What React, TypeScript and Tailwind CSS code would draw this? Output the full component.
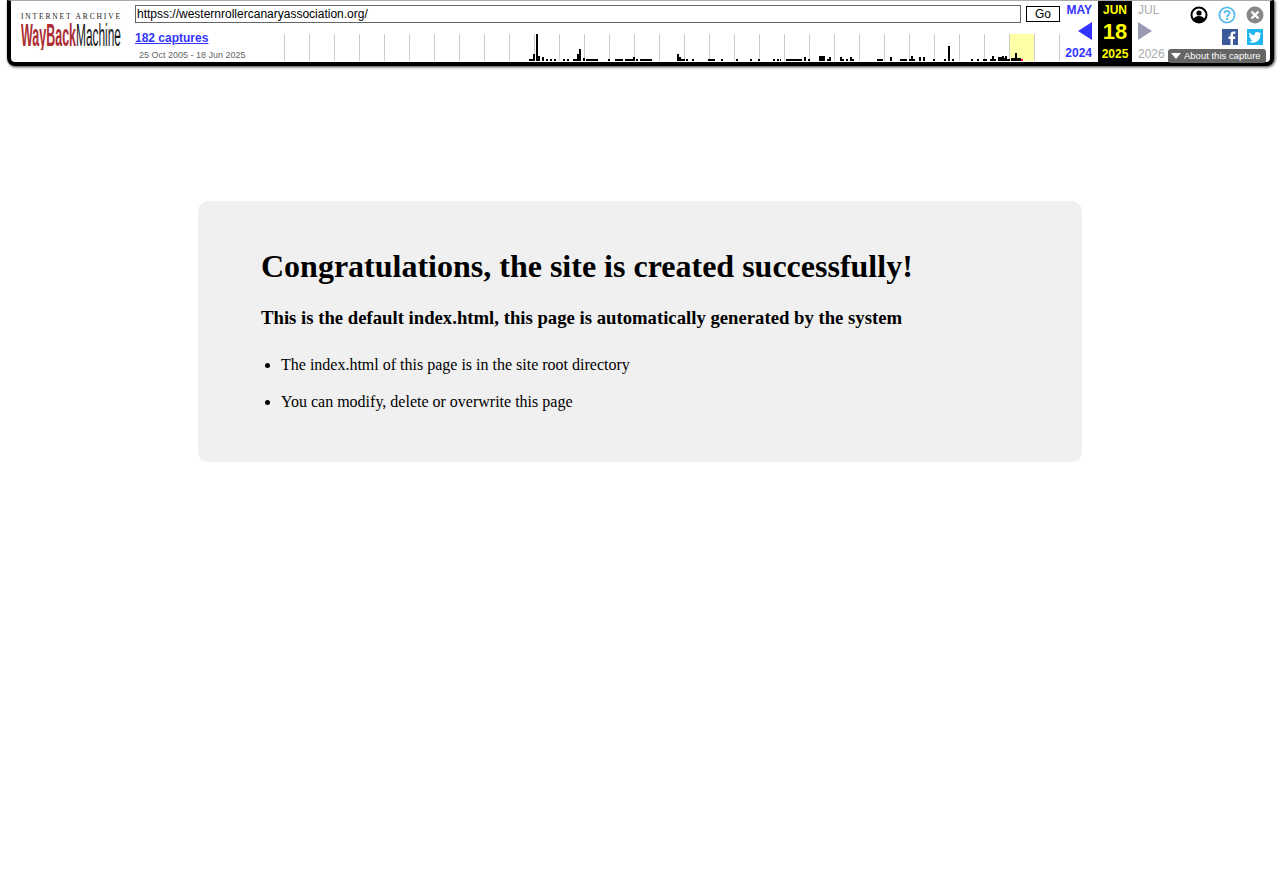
const bars: [number, number, number][] = [
  [529, 4, 2], [533, 2, 7], [536, 2, 27], [538, 2, 5], [542, 2, 4], [546, 2, 2], [550, 2, 2], [554, 2, 2],
  [563, 2, 2], [567, 2, 2], [573, 4, 2], [577, 2, 7], [579, 2, 12], [583, 2, 3], [586, 12, 2],
  [608, 2, 2], [615, 8, 2], [625, 8, 2], [633, 2, 4], [636, 2, 2], [640, 12, 2],
  [677, 2, 7], [679, 2, 4], [681, 4, 2], [686, 2, 2], [692, 2, 2], [708, 7, 2], [721, 2, 2],
  [736, 2, 2], [750, 2, 2], [758, 2, 2], [773, 2, 2], [777, 2, 2], [780, 1, 2],
  [786, 16, 2], [804, 2, 4], [808, 2, 2], [819, 6, 5], [827, 2, 2], [829, 2, 4],
  [840, 2, 4], [842, 2, 2], [846, 2, 2], [850, 2, 4], [852, 2, 2],
  [877, 6, 2], [890, 2, 4], [900, 7, 2], [909, 2, 2], [911, 2, 5], [913, 2, 2], [919, 2, 4], [923, 2, 4],
  [933, 2, 2], [944, 2, 2], [948, 2, 15], [952, 2, 2],
  [971, 2, 2], [977, 2, 2], [983, 4, 2], [990, 2, 2], [992, 2, 5], [994, 2, 2],
  [998, 4, 4], [1002, 2, 5], [1004, 1, 3], [1005, 2, 5], [1007, 3, 2], [1011, 4, 3], [1015, 2, 8], [1017, 4, 3],
]

const ticks = Array.from({ length: 32 }, (_, i) => 284 + i * 25)

function Logo() {
  return (
    <svg width="102" height="38" viewBox="0 0 102 38" className="block">
      <text x="0" y="6.500" textLength="99" lengthAdjust="spacing" fontFamily="Liberation Serif" fontSize="7.500" fill="#222">
        INTERNET ARCHIVE
      </text>
      <text x="0" y="33.500" textLength="55" lengthAdjust="spacingAndGlyphs" fontFamily="Liberation Sans" fontWeight="700" fontSize="31" fill="#ab2e33">
        WayBack
      </text>
      <text x="55" y="33.500" textLength="45" lengthAdjust="spacingAndGlyphs" fontFamily="Liberation Sans" fontSize="31" fill="#1a1a1a">
        Machine
      </text>
    </svg>
  )
}

function Sparkline() {
  return (
    <svg width="778" height="27" viewBox="284 0 778 27" className="block">
      <rect x="1010" y="0" width="24" height="27" fill="#ffffa5" />
      {ticks.map((x) => (
        <rect key={x} x={x} y="0" width="1" height="27" fill="#cccccc" />
      ))}
      {bars.map(([x, w, h]) => (
        <rect key={x} x={x} y={27 - h} width={w} height={h} fill="#000000" />
      ))}
      <rect x="1021" y="25" width="2" height="2" fill="#ff0066" />
    </svg>
  )
}

function UserIcon() {
  return (
    <svg width="18" height="18" viewBox="0 0 18 18">
      <circle cx="9" cy="9" r="7.5" fill="#fff" stroke="#000" strokeWidth="2" />
      <circle cx="9" cy="7" r="2.6" fill="#000" />
      <path d="M3.5 13.5C4.5 10.8 6.5 10 9 10s4.500.8 5.500 3.500A7 7 0 0 1 3.500 13.500Z" fill="#000" />
    </svg>
  )
}

function HelpIcon() {
  return (
    <svg width="18" height="18" viewBox="0 0 18 18">
      <circle cx="9" cy="9" r="7.6" fill="#fff" stroke="#55bbee" strokeWidth="1.8" />
      <path d="M6.500 7.200C6.500 5.700 7.600 4.800 9 4.800s2.600.9 2.600 2.300c0 1.900-2.600 2-2.600 4" fill="none" stroke="#55bbee" strokeWidth="1.800" />
      <rect x="8" y="12" width="2" height="2" fill="#55bbee" />
    </svg>
  )
}

function CloseIcon() {
  return (
    <svg width="18" height="18" viewBox="0 0 18 18">
      <circle cx="9" cy="9" r="8.500" fill="#888888" />
      <path d="M5.500 5.500L12.500 12.500M12.500 5.500L5.500 12.500" stroke="#fff" strokeWidth="2.400" />
    </svg>
  )
}

function FacebookIcon() {
  return (
    <svg width="16" height="16" viewBox="0 0 16 16" className="block">
      <rect width="16" height="16" fill="#3b5998" />
      <path d="M11 16V10h2l.4-2.500H11V6c0-.8.300-1.200 1.200-1.200h1.200V2.600C13 2.500 12.300 2.500 11.600 2.500 9.800 2.500 8.500 3.600 8.500 5.700v1.800h-2V10h2v6Z" fill="#fff" />
    </svg>
  )
}

function TwitterIcon() {
  return (
    <svg width="16" height="16" viewBox="0 0 16 16" className="block">
      <rect width="16" height="16" fill="#1fb6f0" />
      <path d="M14 4.100c-.5.200-1 .4-1.500.4.500-.3 1-.8 1.200-1.400-.5.300-1.100.5-1.700.7a2.700 2.700 0 0 0-4.600 2.400C5.700 6.100 3.800 5.100 2.500 3.500c-.7 1.200-.4 2.800.8 3.600-.4 0-.8-.1-1.200-.3 0 1.300.9 2.400 2.200 2.700-.4.100-.8.100-1.200 0 .3 1.100 1.300 1.800 2.500 1.900A5.400 5.400 0 0 1 1.600 12.500 7.600 7.600 0 0 0 13.300 5.700c.3-.4.500-1 .7-1.600Z" fill="#fff" />
    </svg>
  )
}

export default function App() {
  return (
    <div className="min-h-[885px] bg-white font-['Liberation_Serif',serif] text-black">
      {/* wayback toolbar */}
      <div className="ml-[7px] w-[1267px] h-[66px] bg-white border-x-[4px] border-b-[4px] border-t border-x-black border-b-black border-t-[#aaaaaa] rounded-b-[8px] shadow-[1px_1px_3px_#333333] flex font-['Liberation_Sans',sans-serif]">
        <div className="w-[124px] pl-[10px] pt-[11px] shrink-0">
          <Logo />
        </div>

        <div className="w-[927px] shrink-0 flex flex-col">
          <div className="flex items-start pt-[4px] h-[33px]">
            <div className="w-[886px] h-[18px] border border-[#666666] text-[12px] leading-[16px] pl-[1px] text-black">
              httpss://westernrollercanaryassociation.org/
            </div>
            <div className="ml-[5px] mt-[1px] w-[34px] h-[16px] border border-black text-[12px] leading-[14px] text-center">
              Go
            </div>
          </div>
          <div className="flex">
            <div className="w-[149px]">
              <div className="text-[12px] leading-[14px] font-bold text-[#3333ff] underline -mt-[3px]">182 captures</div>
              <div className="text-[9px] leading-[11px] text-[#666666] pl-[4px] mt-[5px]">25 Oct 2005 - 18 Jun 2025</div>
            </div>
            <Sparkline />
          </div>
        </div>

        <div className="w-[36px] shrink-0 flex flex-col items-end pr-[6px] text-[12px] font-bold text-[#3333ff] leading-[14px]">
          <div className="mt-[2px]">MAY</div>
          <div className="mt-[5px] w-0 h-0 border-y-[9px] border-y-transparent border-r-[14px] border-r-[#3333ff]" />
          <div className="mt-[6px]">2024</div>
        </div>
        <div className="w-[34px] shrink-0 flex flex-col items-center bg-black text-[#ffff00] font-bold text-[12px] leading-[14px]">
          <div className="mt-[2px]">JUN</div>
          <div className="text-[22px] leading-[24px] mt-[3px]">18</div>
          <div className="mt-[3px]">2025</div>
        </div>
        <div className="w-[36px] shrink-0 flex flex-col items-start pl-[6px] text-[12px] text-[#aaaaaa] leading-[14px]">
          <div className="mt-[2px]">JUL</div>
          <div className="mt-[5px] w-0 h-0 border-y-[9px] border-y-transparent border-l-[14px] border-l-[#9a9ab4]" />
          <div className="mt-[7px]">2026</div>
        </div>

        <div className="w-[101px] shrink-0 flex flex-col relative">
          <div className="flex pl-[22px] pt-[5px] gap-[10px]">
            <UserIcon />
            <HelpIcon />
            <CloseIcon />
          </div>
          <div className="flex pl-[54px] gap-[9px] mt-[5px]">
            <FacebookIcon />
            <TwitterIcon />
          </div>
          <div className="absolute left-0 top-[48px] w-[98px] h-[14px] bg-[#666666] rounded-[3px] flex items-center whitespace-nowrap text-white text-[9.5px] leading-[14px]">
            <span className="ml-[3px] mr-[3px] w-0 h-0 border-x-[5px] border-x-transparent border-t-[6px] border-t-white" />
            About this capture
          </div>
        </div>
      </div>

      {/* page content */}
      <div className="mx-auto mt-[135px] w-[884px] h-[261px] bg-[#f0f0f0] rounded-[10px] pl-[63px] pt-[47px]">
        <h1 className="text-[32px] leading-[37px] font-bold">Congratulations, the site is created successfully!</h1>
        <h2 className="text-[18.72px] leading-[22px] font-bold mt-[22px]">
          This is the default index.html, this page is automatically generated by the system
        </h2>
        <ul className="list-disc pl-[20px] mt-[18px] text-[16px] leading-[36.8px]">
          <li>The index.html of this page is in the site root directory</li>
          <li>You can modify, delete or overwrite this page</li>
        </ul>
      </div>
    </div>
  )
}
